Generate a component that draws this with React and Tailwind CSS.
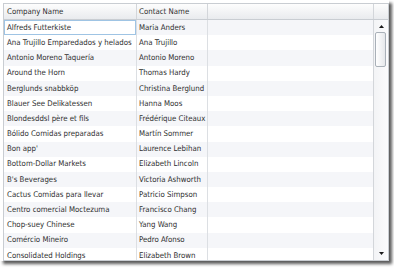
const rows = [
  ["Alfreds Futterkiste", "Maria Anders"],
  ["Ana Trujillo Emparedados y helados", "Ana Trujillo"],
  ["Antonio Moreno Taquería", "Antonio Moreno"],
  ["Around the Horn", "Thomas Hardy"],
  ["Berglunds snabbköp", "Christina Berglund"],
  ["Blauer See Delikatessen", "Hanna Moos"],
  ["Blondesddsl père et fils", "Frédérique Citeaux"],
  ["Bólido Comidas preparadas", "Martín Sommer"],
  ["Bon app'", "Laurence Lebihan"],
  ["Bottom-Dollar Markets", "Elizabeth Lincoln"],
  ["B's Beverages", "Victoria Ashworth"],
  ["Cactus Comidas para llevar", "Patricio Simpson"],
  ["Centro comercial Moctezuma", "Francisco Chang"],
  ["Chop-suey Chinese", "Yang Wang"],
  ["Comércio Mineiro", "Pedro Afonso"],
  ["Consolidated Holdings", "Elizabeth Brown"],
];

const Arrow = ({ down }) => (
  <svg width="5" height="3" viewBox="0 0 5 3" className="block">
    <path d={down ? "M0 0H5L2.5 3Z" : "M0 3H5L2.5 0Z"} fill="#1a1a1a" />
  </svg>
);

const App = () => {
  return (
    <div className="w-[394px] h-[268px] bg-white overflow-hidden">
      <div className="w-[389px] h-[261px] bg-white pt-[3px] pl-[3px] shadow-[3px_3px_3px_rgba(0,0,0,0.65)]">
        <div
          className="w-[386px] h-[258px] border border-[#c9cdd2] flex flex-col overflow-hidden text-[7.8px] text-[#2e2e2e]"
          style={{ fontFamily: '"DejaVu Sans Condensed", "Liberation Sans", sans-serif' }}
        >
          {/* header */}
          <div className="h-[16px] flex shrink-0 border-b border-[#c9cdd2] bg-gradient-to-b from-[#fdfdfd] to-[#e9ebee]">
            <div className="w-[133px] border-r border-[#d3d6da] pl-[3px] pt-[1px] flex items-center">Company Name</div>
            <div className="w-[71px] border-r border-[#d3d6da] pl-[2px] pt-[1px] flex items-center">Contact Name</div>
            <div className="w-[166px] border-r border-[#d3d6da]" />
            <div className="flex-1" />
          </div>

          {/* body */}
          <div className="flex-1 flex min-h-0">
            <div className="flex-1 overflow-hidden">
              {rows.map(([company, contact], i) => (
                <div
                  key={company}
                  className={`h-[15.2px] flex ${i % 2 === 0 ? "bg-[#f5f6f9]" : "bg-white"}`}
                >
                  <div className="w-[133px] border-r border-[#dcdfe3] flex">
                    <div
                      className={`flex-1 flex items-center pl-[2px] whitespace-nowrap overflow-hidden border ${
                        i === 0 ? "border-[#9fc4e4] bg-white" : "border-transparent"
                      }`}
                    >
                      {company}
                    </div>
                  </div>
                  <div className="w-[71px] border-r border-[#dcdfe3] flex items-center pl-[2px] whitespace-nowrap overflow-hidden">
                    {contact}
                  </div>
                  <div className="flex-1" />
                </div>
              ))}
            </div>

            {/* scrollbar */}
            <div className="w-[15px] border-l border-[#d3d6da] flex flex-col bg-gradient-to-r from-[#f3f4f6] to-[#fbfbfc]">
              <div className="h-[12px] flex items-center justify-center">
                <Arrow />
              </div>
              <div className="ml-[1px] w-[11px] h-[35px] rounded-[2px] border border-[#a9b0b8] bg-gradient-to-r from-[#ffffff] to-[#e6e8eb]" />
              <div className="flex-1" />
              <div className="h-[14px] flex items-center justify-center">
                <Arrow down />
              </div>
            </div>
          </div>
        </div>
      </div>
    </div>
  );
};

export default App;
